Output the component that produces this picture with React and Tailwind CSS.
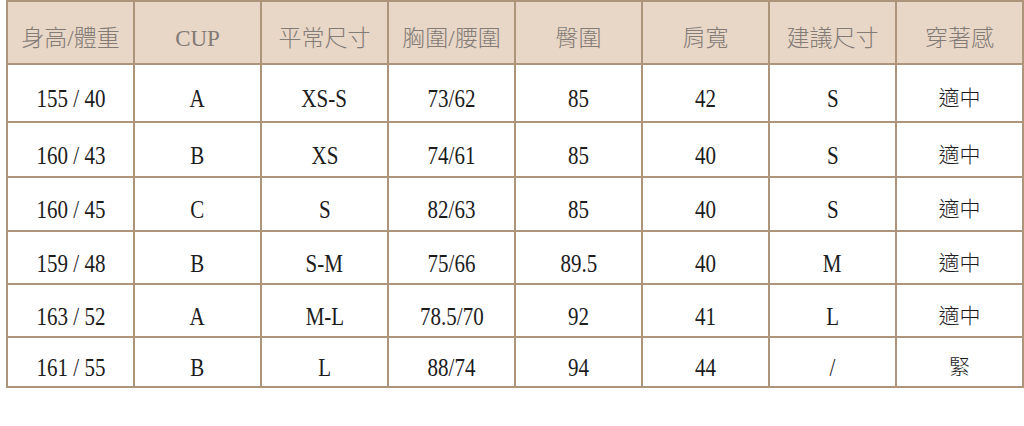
import React from "react";

const headers = ["身高/體重", "CUP", "平常尺寸", "胸圍/腰圍", "臀圍", "肩寬", "建議尺寸", "穿著感"];

const rows = [
  { h: "h-[58px]", cells: ["155 / 40", "A", "XS-S", "73/62", "85", "42", "S", "適中"] },
  { h: "h-[55px]", cells: ["160 / 43", "B", "XS", "74/61", "85", "40", "S", "適中"] },
  { h: "h-[54px]", cells: ["160 / 45", "C", "S", "82/63", "85", "40", "S", "適中"] },
  { h: "h-[53px]", cells: ["159 / 48", "B", "S-M", "75/66", "89.5", "40", "M", "適中"] },
  { h: "h-[53px]", cells: ["163 / 52", "A", "M-L", "78.5/70", "92", "41", "L", "適中"] },
  { h: "h-[50px]", cells: ["161 / 55", "B", "L", "88/74", "94", "44", "/", "緊"] },
];

const font = { fontFamily: '"Liberation Serif", "Noto Sans CJK TC", serif' };

export default function App() {
  return (
    <div className="w-[1024px] h-[426px] bg-white overflow-hidden" style={font}>
      <div className="ml-[6px] w-[1018px] border-l-2 border-t-2 border-[#ad957c] grid grid-cols-8">
        {headers.map((t, i) => (
          <div
            key={i}
            className="h-[63px] border-r-2 border-b-2 border-[#ad957c] bg-[#e8d6c6] flex items-center justify-center pt-[11px] text-[23px] font-light text-[#827b76] leading-none whitespace-nowrap"
          >
            {t}
          </div>
        ))}
        {rows.map((r, ri) =>
          r.cells.map((c, ci) => (
            <div
              key={ri + "-" + ci}
              className={`${r.h} border-r-2 border-b-2 border-[#ad957c] bg-white flex items-center justify-center pt-[11px] leading-none text-[#1c1c1c] whitespace-nowrap`}
            >
              {ci === 7 ? (
                <span className="text-[21px] font-light">{c}</span>
              ) : (
                <span className="inline-block text-[25px] scale-x-[0.84]">{c}</span>
              )}
            </div>
          ))
        )}
      </div>
    </div>
  );
}
